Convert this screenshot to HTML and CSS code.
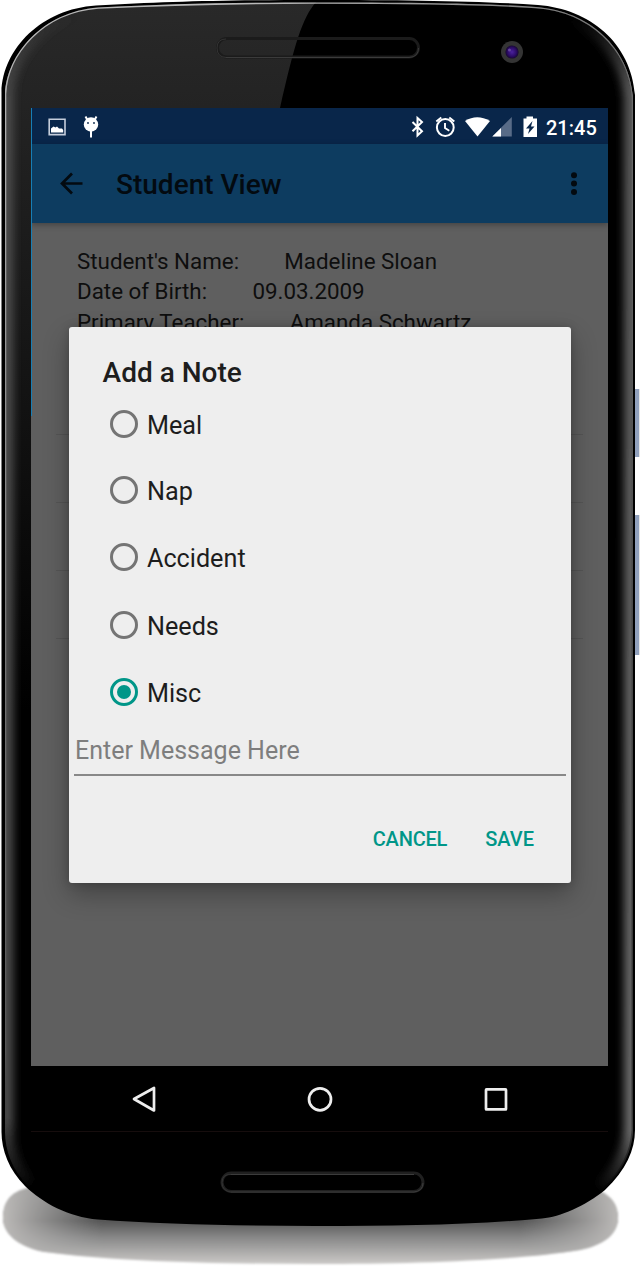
FILE: index.html
```html
<!DOCTYPE html>
<html lang="en">
<head>
<meta charset="utf-8">
<title>Student View</title>
<link rel="stylesheet" href="styles.css">
</head>
<body>
<div class="device">
  <svg class="frame" width="641" height="1266" viewBox="0 0 641 1266" aria-hidden="true">
    <defs>
      <path id="shell" d="M1.500 92C3 48 42 9 96 5.500C165 1.500 225 0 318 0C405 0 480 1 538 5C590 9 631 43 635 95V1130C635 1150 626 1170 605 1190C585 1206 560 1217 542 1218.500C470 1225 400 1226 315 1226C240 1226 160 1224 98 1219.500C68 1217 43 1203 25 1186C9 1170 1.500 1150 1.500 1132Z"/>
      <path id="rim" d="M5 94C7 54 42 12 98 7.500C170 4 230 2.500 318 2.500C405 2.500 480 3 536 7C590 11 629 48 633 97V1130C632 1150 624 1170 603 1190C580 1206 560 1215 542 1217C470 1223 400 1224 315 1224C240 1224 160 1222 98 1217C68 1215 45 1201 28 1186C12 1170 5 1150 5 1132Z"/>
      <clipPath id="rimClip"><use href="#rim"/></clipPath>
      <linearGradient id="gloss" x1="0" y1="0" x2="0" y2="1">
        <stop offset="0" stop-color="#292929"/><stop offset=".15" stop-color="#232323"/><stop offset=".6" stop-color="#111"/><stop offset="1" stop-color="#000"/>
      </linearGradient>
      <linearGradient id="leftGlow" gradientUnits="userSpaceOnUse" x1="0" y1="15" x2="0" y2="1190">
        <stop offset="0" stop-color="#555" stop-opacity="0"/><stop offset=".07" stop-color="#484848"/><stop offset=".94" stop-color="#484848"/><stop offset="1" stop-color="#444" stop-opacity="0"/>
      </linearGradient>
      <linearGradient id="rightGlow" gradientUnits="userSpaceOnUse" x1="0" y1="18" x2="0" y2="1192">
        <stop offset="0" stop-color="#555" stop-opacity="0"/><stop offset=".06" stop-color="#565656"/><stop offset=".95" stop-color="#686868"/><stop offset="1" stop-color="#555" stop-opacity="0"/>
      </linearGradient>
      <linearGradient id="edge" x1="0" x2="0" y1="0" y2="1">
        <stop offset="0" stop-color="#b9b9b9"/><stop offset=".12" stop-color="#aaa"/><stop offset=".5" stop-color="#777"/><stop offset=".86" stop-color="#555"/><stop offset=".93" stop-color="#333" stop-opacity="0"/>
      </linearGradient>
      <linearGradient id="edgeDim" x1="0" x2="1">
        <stop offset=".4" stop-color="#000" stop-opacity="0"/><stop offset="1" stop-color="#000" stop-opacity=".38"/>
      </linearGradient>
      <linearGradient id="ground" x1="0" x2="0" y1="0" y2="1">
        <stop offset="0" stop-color="#777"/><stop offset=".43" stop-color="#555"/><stop offset=".65" stop-color="#888"/><stop offset="1" stop-color="#cbc9c7"/>
      </linearGradient>
      <linearGradient id="groundEnds" x1="0" x2="1">
        <stop offset="0" stop-color="#bcbab8"/><stop offset=".16" stop-color="#aaa" stop-opacity="0"/><stop offset=".84" stop-color="#aaa" stop-opacity="0"/><stop offset="1" stop-color="#bcbab8"/>
      </linearGradient>
      <radialGradient id="lens"><stop offset="0" stop-color="#4b229c"/><stop offset=".65" stop-color="#2c0b68"/><stop offset="1" stop-color="#17082f"/></radialGradient>
      <filter id="soft"><feGaussianBlur stdDeviation="1"/></filter>
      <filter id="glow" filterUnits="userSpaceOnUse" x="-30" y="-30" width="700" height="1320"><feGaussianBlur stdDeviation="4.500"/></filter>
    </defs>
    <g filter="url(#soft)">
      <path d="M28 1188C6 1193 3 1207 3 1219C4 1236 22 1248 45 1252C110 1261 210 1264 315 1264C420 1264 520 1260 580 1250C603 1245 617 1235 618 1219C618 1205 612 1197 600 1191Z" fill="url(#ground)"/>
      <path d="M28 1188C6 1193 3 1207 3 1219C4 1236 22 1248 45 1252C110 1261 210 1264 315 1264C420 1264 520 1260 580 1250C603 1245 617 1235 618 1219C618 1205 612 1197 600 1191Z" fill="url(#groundEnds)"/>
    </g>
    <rect x="634" y="389" width="5" height="68" fill="#91a1bd"/><rect x="639" y="389" width="1" height="68" fill="#e5e5e5"/>
    <rect x="634" y="515" width="5" height="140" fill="#91a1bd"/><rect x="639" y="515" width="1" height="140" fill="#e5e5e5"/>
    <use href="#shell" fill="#000"/>
    <g clip-path="url(#rimClip)">
      <path d="M0 0H318C303 15 295 42 280 108H31V710H0Z" fill="url(#gloss)"/>
      <path d="M98 7.500C42 12 7 54 5 94V1132C5 1150 12 1170 28 1186" fill="none" stroke="url(#leftGlow)" stroke-width="17" filter="url(#glow)"/>
      <path d="M566 12C605 24 630 61 633 97V1130C632 1150 624 1170 603 1190" fill="none" stroke="url(#rightGlow)" stroke-width="18" filter="url(#glow)"/>
      <use href="#rim" fill="none" stroke="url(#edge)" stroke-width="2.600"/>
      <use href="#rim" fill="none" stroke="url(#edgeDim)" stroke-width="3"/>
    </g>
    <rect x="217.500" y="38.500" width="201" height="18.500" rx="9.200" fill="none" stroke="#1b1b1b" stroke-width="3"/>
    <path d="M226 57.500H409Q418.500 57 418.500 48" fill="none" stroke="#3b3b3b"/>
    <path d="M226 57.500Q217 57 217 48T226 39" fill="none" stroke="#333"/>
    <circle cx="512" cy="52" r="11" fill="#343434"/><circle cx="512" cy="52" r="6.600" fill="url(#lens)"/>
    <circle cx="509.500" cy="50" r="1.500" fill="#65449c"/>
    <rect x="222" y="1173" width="201" height="18.500" rx="9.200" fill="none" stroke="#202020" stroke-width="3"/>
    <path d="M231 1192H414Q423 1191 423 1183M231 1174.500H414" fill="none" stroke="#3c3c3c"/>
    <path d="M231 1192Q222 1191 222 1182.500T231 1174.500" fill="none" stroke="#333"/>
  </svg>

  <main class="screen">
    <header class="status">
      <svg width="54" height="24" viewBox="0 0 54 24">
        <path d="M1.200 5.200H17V20.600H1.200Z" fill="none" stroke="#c5cddb" stroke-width="1.600"/>
        <path d="M3 18.500V14.500L5.500 12.500L7.500 13.500L9 12.500L11 14.500H14L15.200 16V18.500Z" fill="#fff"/>
        <circle cx="43" cy="10.500" r="7.200" fill="#fff"/><path d="M37.500 2.500L39.500 6M48.500 2.500L46.500 6M43 17V23.500" stroke="#fff" stroke-width="2"/>
        <circle cx="40" cy="9" r=".9" fill="#0a274b"/><circle cx="46" cy="9" r=".9" fill="#0a274b"/>
      </svg>
      <div class="status-right">
        <svg width="130" height="24" viewBox="0 0 130 24">
          <path d="M1.500 8L11 17.300L6.500 21.500V4L11 8L1.500 17.300" fill="none" stroke="#fff" stroke-width="2"/>
          <circle cx="34.300" cy="13.500" r="8.400" fill="none" stroke="#fff" stroke-width="2"/>
          <path d="M34 9V14L38.300 16.700M25.300 7.500L30.300 3.500M38.300 3.500L43.300 7.500" fill="none" stroke="#fff" stroke-width="1.900"/>
          <path d="M54 7Q66 -.5 79 7L66.500 22.500Z" fill="#fff"/>
          <path d="M100.800 3V22.500H81.300Z" fill="#586b87"/><path d="M90 14V22.500H81.300Z" fill="#fff"/>
          <path d="M112.500 4.500H115.500V2.500H122V4.500H126V23H112.500Z" fill="#fff"/><path d="M121.500 7L115 14.500H118.500L117 20L123.500 12.500H120Z" fill="#0a274b"/>
        </svg>
        <span class="clock">21:45</span>
      </div>
    </header>
    <nav class="appbar">
      <svg width="24" height="24" viewBox="0 0 24 24"><path d="M23.500 11.500H3.500M13 1.500L3 11.500L13 21.500" fill="none" stroke="#030a10" stroke-width="2.700"/></svg>
      <h1 class="title">Student View</h1>
      <svg class="more" width="6" height="24" viewBox="0 0 6 24"><circle cx="3" cy="3.200" r="3"/><circle cx="3" cy="11.500" r="3"/><circle cx="3" cy="19.900" r="3"/></svg>
    </nav>
    <section class="content">
      <div class="details">
        <p><span>Student's Name:</span><span>Madeline Sloan</span></p>
        <p><span>Date of Birth:</span><span>09.03.2009</span></p>
        <p><span>Primary Teacher:</span><span>Amanda Schwartz</span></p>
      </div>
      <div class="rules"><i></i><i></i><i></i><i></i></div>
    </section>
    <section class="dialog">
      <h2>Add a Note</h2>
      <div class="options">
        <div class="option"><span class="radio"></span><span>Meal</span></div>
        <div class="option"><span class="radio"></span><span>Nap</span></div>
        <div class="option"><span class="radio"></span><span>Accident</span></div>
        <div class="option"><span class="radio"></span><span>Needs</span></div>
        <div class="option"><span class="radio checked"></span><span>Misc</span></div>
      </div>
      <div class="message">Enter Message Here</div>
      <div class="actions"><span class="cancel">CANCEL</span><span>SAVE</span></div>
    </section>
  </main>
  <footer class="navbar">
    <svg width="28" height="28" viewBox="0 0 28 28"><path d="M4 14L24 3V25.500Z"/></svg>
    <svg width="28" height="28" viewBox="0 0 28 28"><circle cx="14" cy="14.300" r="11"/></svg>
    <svg width="28" height="28" viewBox="0 0 28 28"><rect x="4" y="4.400" width="20" height="20" rx=".5"/></svg>
  </footer>
</div>
</body>
</html>
```
FILE: styles.css
```css
* { box-sizing: border-box; }
body { margin: 0; background: #fff; font-family: Roboto, sans-serif; }
h1, h2, p { margin: 0; }
svg { display: block; flex: none; }
.device { position: relative; width: 641px; height: 1266px; padding: 108px 33px 0 31px; overflow: hidden; }
.frame { position: absolute; inset: 0; }
.screen { position: relative; display: flex; flex-direction: column; width: 577px; height: 958px; background: #5f5f5f; overflow: hidden; }
.screen::before { content: ""; position: absolute; z-index: 2; left: 0; top: 0; width: 1px; height: 308px; background: #177eb5; }
.status { display: flex; justify-content: space-between; height: 36px; padding: 6px 11px 0 17px; background: #09264a; }
.status-right { display: flex; gap: 5px; }
.clock { width: 51px; color: #fff; font-size: 20px; line-height: 28px; font-weight: 500; white-space: nowrap; }
.appbar { display: flex; align-items: center; position: relative; height: 79px; padding: 0 31px 0 28px; background: #0d3c60; box-shadow: 0 2px 6px rgba(0,0,0,.3); color: #030a10; }
.title { margin-left: 33px; padding-top: 3px; font-size: 28px; font-weight: 500; line-height: 36px; white-space: nowrap; }
.more { margin-left: auto; fill: #030a10; }
.content { color: #0e0e0e; }
.details { height: 211px; padding: 23px 0 0 46px; font-size: 22.35px; line-height: 30.4px; }
.details p { display: flex; gap: 45.3px; white-space: pre; }
.rules { display: grid; gap: 67px; padding: 0 25px; }
.rules i { height: 1px; background: #555; }
.dialog { position: absolute; left: 38px; top: 219px; width: 502px; height: 556px; padding: 27px 5px 0 5px; border-radius: 3px; background: #eee; box-shadow: 0 11px 26px rgba(0,0,0,.3), 0 0 10px rgba(0,0,0,.18); color: #1d1d1d; }
.dialog h2 { padding-left: 28.6px; font-size: 28px; font-weight: 500; line-height: 38px; }
.options { padding-left: 36.4px; }
.option { display: flex; align-items: center; gap: 8.6px; height: 67.25px; font-size: 25.2px; line-height: 30px; }
.option span:last-child { padding-top: 4px; }
.option:first-child { height: 66px; margin-top: -1.5px; }
.radio { width: 28px; height: 28px; border: 3px solid #747474; border-radius: 50%; }
.checked { display: grid; place-items: center; border-color: #009688; }
.checked::after { content: ""; width: 14px; height: 14px; border-radius: 50%; background: #009688; }
.message { height: 50.5px; padding-left: 1px; border-bottom: 2px solid #888; color: #7e7e7e; font-size: 25px; line-height: 49px; }
.actions { display: flex; justify-content: flex-end; gap: 38px; padding: 46.5px 32px 0 0; color: #009688; font-size: 20px; font-weight: 500; line-height: 32px; }
.cancel { letter-spacing: -.2px; }
.navbar { position: relative; display: flex; align-items: center; justify-content: space-between; width: 577px; height: 66px; padding: 0 98px 0 99px; background: #000; border-bottom: 1px solid #160d0d; }
.navbar svg { fill: none; stroke: #eee; stroke-width: 2.7; stroke-linejoin: round; }
```
